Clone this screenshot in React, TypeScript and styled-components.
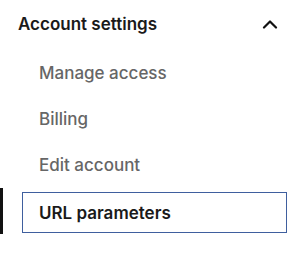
import React from "react";
import styled, { createGlobalStyle } from "styled-components";

const Global = createGlobalStyle`
  html, body { margin: 0; padding: 0; background: #ffffff; }
  body { font-family: Inter, "Noto Sans", sans-serif; -webkit-font-smoothing: antialiased; }
`;

const Panel = styled.nav`
  width: 295px;
  display: flex;
  flex-direction: column;
`;

const Header = styled.div`
  display: flex;
  align-items: center;
  justify-content: space-between;
  height: 46px;
  padding: 1px 17px 0 18px;
  box-sizing: border-box;
`;

const Title = styled.span`
  font-size: 17px;
  font-weight: 600;
  color: #1a1a1a;
`;

const Chevron = styled.svg`
  width: 16px;
  height: 10px;
  display: block;
`;

const List = styled.ul`
  list-style: none;
  margin: 4px 0 0;
  padding: 0;
  display: flex;
  flex-direction: column;
`;

const Row = styled.li<{ $active?: boolean }>`
  height: 46px;
  display: flex;
  align-items: stretch;
  box-sizing: border-box;
  border-left: 3px solid ${(p) => (p.$active ? "#111111" : "transparent")};
  padding: ${(p) => (p.$active ? "4px 8px 1px 19px" : "0 8px 0 19px")};
`;

const Link = styled.a<{ $active?: boolean }>`
  flex: 1;
  display: flex;
  align-items: center;
  box-sizing: border-box;
  padding-left: 16px;
  border: 1px solid ${(p) => (p.$active ? "#3f5f9e" : "transparent")};
  font-size: 17px;
  font-weight: ${(p) => (p.$active ? 600 : 500)};
  color: ${(p) => (p.$active ? "#1a1a1a" : "#666666")};
  text-decoration: none;
`;

const items = ["Manage access", "Billing", "Edit account", "URL parameters"];

export default function App() {
  return (
    <>
      <Global />
      <Panel>
        <Header>
          <Title>Account settings</Title>
          <Chevron viewBox="0 0 16 10" fill="none">
            <path d="M2 8.5 L8 2.5 L14 8.5" stroke="#111" strokeWidth="2.2" strokeLinecap="round" strokeLinejoin="round" />
          </Chevron>
        </Header>
        <List>
          {items.map((label, i) => {
            const active = i === items.length - 1;
            return (
              <Row key={label} $active={active}>
                <Link $active={active} href="#">{label}</Link>
              </Row>
            );
          })}
        </List>
      </Panel>
    </>
  );
}
